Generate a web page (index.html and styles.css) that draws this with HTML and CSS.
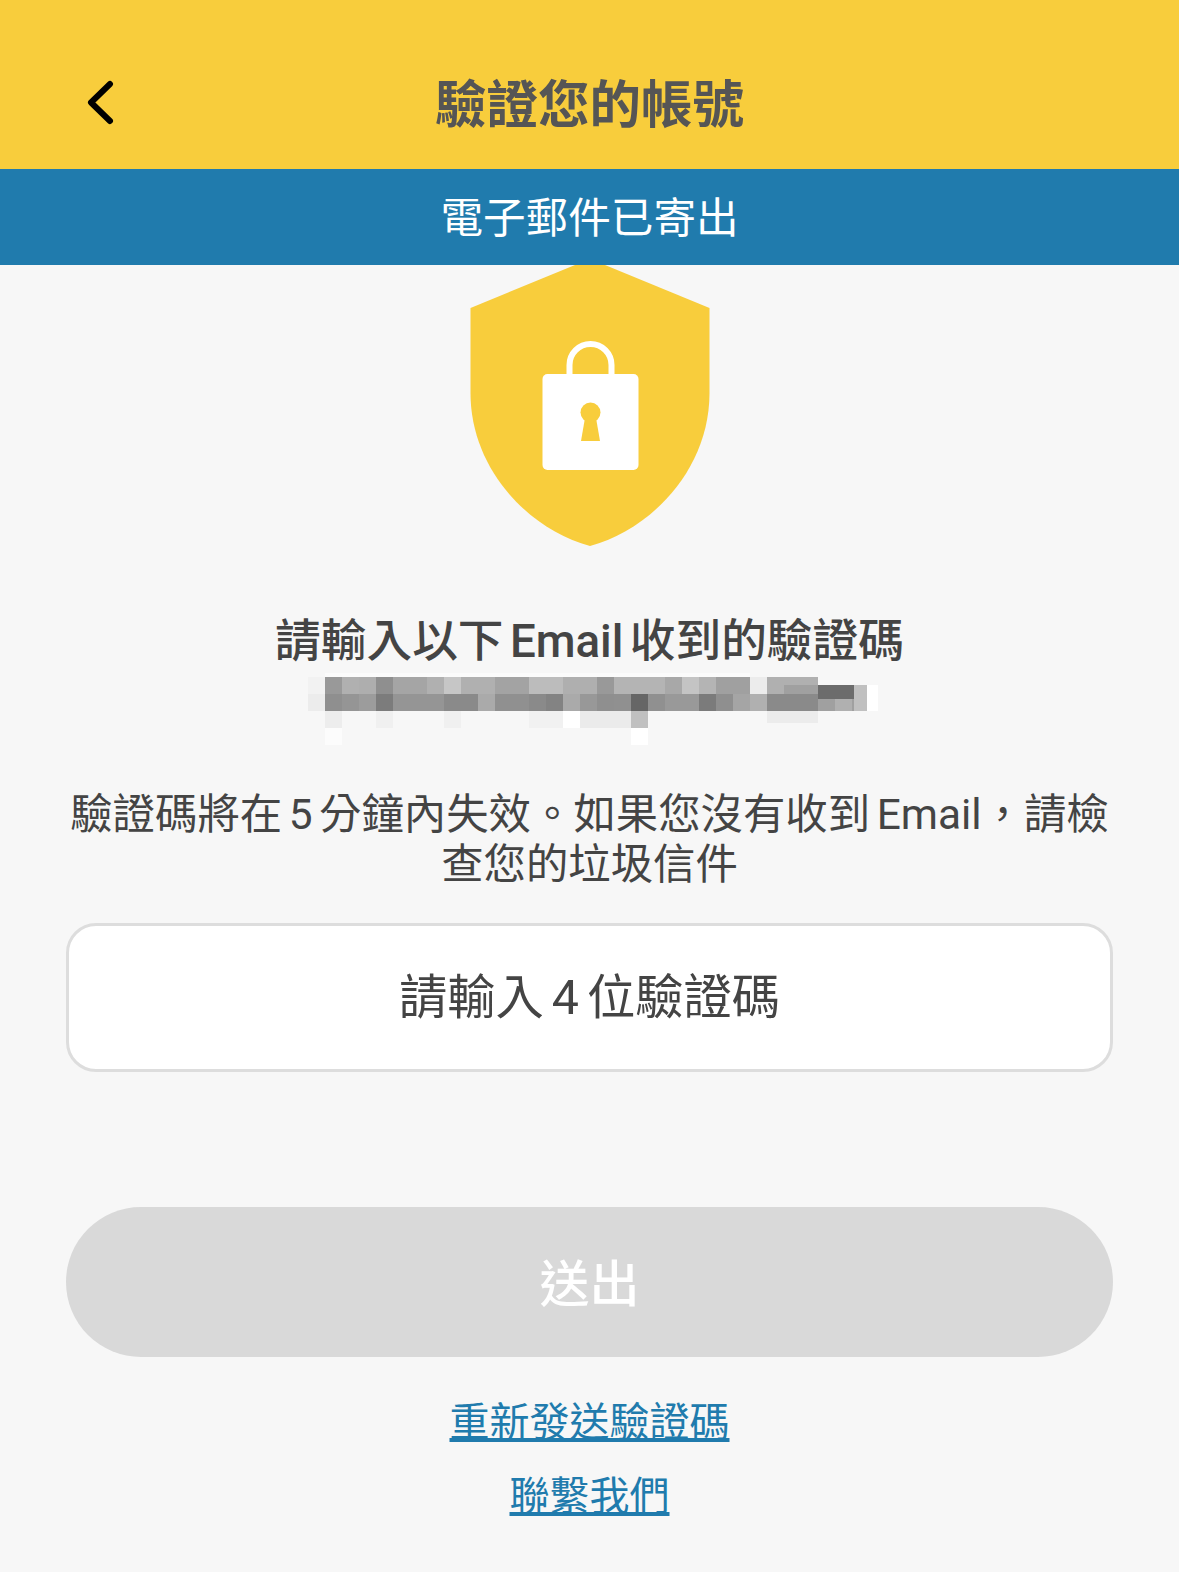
FILE: index.html
```html
<!DOCTYPE html>
<html lang="zh-Hant">
<head>
<meta charset="utf-8">
<title>驗證您的帳號</title>
<link rel="stylesheet" href="styles.css">
</head>
<body>
<div class="page">
  <header class="topbar">
    <svg class="back" viewBox="0 0 30 46" aria-hidden="true"><path d="M24 5 L5 23.5 L24 42"/></svg>
    <h1 class="title">驗證您的帳號</h1>
  </header>
  <div class="notice">電子郵件已寄出</div>
  <main class="content">
    <svg class="shield" viewBox="0 0 240 282" aria-hidden="true">
      <path class="shield-body" d="M105 0 H135 L239.5 43 V128 C239.5 205 180 265 120 281 C60 265 0.5 205 0.5 128 V43 Z"/>
      <path class="lock-shackle" d="M99.5 112 V100 A21 21 0 0 1 141.5 100 V112"/>
      <rect class="lock-box" x="72.5" y="109" width="96" height="96" rx="5"/>
      <circle class="lock-hole" cx="120.5" cy="147.5" r="10"/>
      <path class="lock-hole" d="M115.5 150 H125.5 L130 176 H111 Z"/>
    </svg>
    <h2 class="heading">請輸入以下 Email 收到的驗證碼</h2>
    <svg class="mosaic" viewBox="0 -4 570 72" shape-rendering="crispEdges" aria-hidden="true">
      <rect x="17" y="-4" width="425" height="4" fill="#fbfbfb"/>
      <rect x="0" y="0" width="17" height="17" fill="#f2f2f2"/><rect x="0" y="17" width="17" height="17" fill="#ececec"/>
      <rect x="17" y="0" width="17" height="17" fill="#999"/><rect x="34" y="0" width="17" height="17" fill="#b0b0b0"/><rect x="51" y="0" width="17" height="17" fill="#aeaeae"/><rect x="68" y="0" width="17" height="17" fill="#8f8f8f"/><rect x="85" y="0" width="17" height="17" fill="#a5a5a5"/><rect x="102" y="0" width="17" height="17" fill="#a5a5a5"/><rect x="119" y="0" width="17" height="17" fill="#b0b0b0"/><rect x="136" y="0" width="17" height="17" fill="#c6c6c6"/><rect x="153" y="0" width="34" height="17" fill="#b0b0b0"/><rect x="187" y="0" width="34" height="17" fill="#a3a3a3"/><rect x="221" y="0" width="34" height="17" fill="#bcbcbc"/><rect x="255" y="0" width="34" height="17" fill="#afafaf"/><rect x="289" y="0" width="17" height="17" fill="#999"/><rect x="306" y="0" width="51" height="17" fill="#b4b4b4"/><rect x="357" y="0" width="17" height="17" fill="#a8a8a8"/><rect x="374" y="0" width="17" height="17" fill="#c4c4c4"/><rect x="391" y="0" width="17" height="17" fill="#b4b4b4"/><rect x="408" y="0" width="34" height="17" fill="#a0a0a0"/><rect x="442" y="0" width="17" height="17" fill="#ececec"/><rect x="459" y="0" width="51" height="17" fill="#b0b0b0"/>
      <rect x="17" y="17" width="17" height="17" fill="#8f8f8f"/><rect x="34" y="17" width="17" height="17" fill="#959595"/><rect x="51" y="17" width="17" height="17" fill="#9c9c9c"/><rect x="68" y="17" width="17" height="17" fill="#7c7c7c"/><rect x="85" y="17" width="51" height="17" fill="#959595"/><rect x="136" y="17" width="34" height="17" fill="#8a8a8a"/><rect x="170" y="17" width="17" height="17" fill="#aaa"/><rect x="187" y="17" width="34" height="17" fill="#909090"/><rect x="221" y="17" width="17" height="17" fill="#8a8a8a"/><rect x="238" y="17" width="17" height="17" fill="#838383"/><rect x="255" y="17" width="17" height="17" fill="#aaa"/><rect x="272" y="17" width="17" height="17" fill="#989898"/><rect x="289" y="17" width="17" height="17" fill="#8f8f8f"/><rect x="306" y="17" width="17" height="17" fill="#909090"/><rect x="323" y="17" width="17" height="17" fill="#666"/><rect x="340" y="17" width="17" height="17" fill="#909090"/><rect x="357" y="17" width="34" height="17" fill="#999"/><rect x="391" y="17" width="17" height="17" fill="#7b7b7b"/><rect x="408" y="17" width="17" height="17" fill="#8f8f8f"/><rect x="425" y="17" width="17" height="17" fill="#a5a5a5"/><rect x="442" y="17" width="17" height="17" fill="#b0b0b0"/><rect x="459" y="17" width="51" height="17" fill="#8a8a8a"/><rect x="510" y="17" width="17" height="17" fill="#a0a0a0"/><rect x="527" y="17" width="17" height="17" fill="#b0b0b0"/><rect x="544" y="17" width="2" height="17" fill="#a0a0a0"/>
      <rect x="546" y="8" width="13" height="26" fill="#c0c0c0"/><rect x="559" y="8" width="11" height="26" fill="#ffffff"/>
      <rect x="510" y="8" width="36" height="14" fill="#6c6c6c"/><rect x="476" y="8" width="34" height="9" fill="#a0a0a0"/>
      <rect x="17" y="34" width="17" height="17" fill="#ededed"/><rect x="68" y="34" width="17" height="17" fill="#f0f0f0"/><rect x="136" y="34" width="17" height="17" fill="#f0f0f0"/><rect x="221" y="34" width="34" height="17" fill="#f1f1f1"/><rect x="255" y="34" width="17" height="17" fill="#fff"/><rect x="272" y="34" width="51" height="17" fill="#ebebeb"/><rect x="323" y="34" width="17" height="17" fill="#c0c0c0"/><rect x="459" y="34" width="51" height="12" fill="#ececec"/>
      <rect x="323" y="51" width="17" height="17" fill="#fff"/><rect x="17" y="51" width="17" height="17" fill="#fcfcfc"/>
    </svg>
    <p class="body-text">驗證碼將在 5 分鐘內失效。如果您沒有收到 Email，請檢查您的垃圾信件</p>
    <div class="code-input">請輸入 4 位驗證碼</div>
    <button class="submit" type="button">送出</button>
    <a class="link link-first" href="#">重新發送驗證碼</a>
    <a class="link link-second" href="#">聯繫我們</a>
  </main>
</div>
</body>
</html>
```
FILE: styles.css
```css
* { box-sizing: border-box; margin: 0; padding: 0; }
html, body { width: 1179px; height: 1572px; overflow: hidden; }
body { background: #f7f7f7; font-family: Roboto, "Noto Sans CJK TC", sans-serif; color: #444; }
.page { display: flex; flex-direction: column; height: 1572px; }
.topbar { height: 169px; background: #f8cd3c; display: flex; align-items: center; justify-content: center; position: relative; padding-top: 42px; }
.back { position: absolute; left: 86px; top: 79px; width: 30px; height: 46px; }
.back path { fill: none; stroke: #000; stroke-width: 6; stroke-linecap: round; stroke-linejoin: round; }
.title { font-size: 51.5px; font-weight: 700; line-height: 70px; color: #555; }
.notice { height: 96px; padding-bottom: 6px; background: #207bad; color: #fff; font-size: 42.6px; display: flex; align-items: center; justify-content: center; }
.content { display: flex; flex-direction: column; align-items: center; padding: 0 66px; }
.shield { width: 240px; height: 282px; display: block; margin-left: 1px; }
.shield-body { fill: #f8cd3c; }
.lock-box { fill: #fff; }
.lock-hole { fill: #f8cd3c; }
.lock-shackle { fill: none; stroke: #fff; stroke-width: 6; }
.heading { font-size: 45.7px; font-weight: 500; line-height: 62px; margin-top: 64px; color: #444; text-align: center; word-spacing: -5px; }
.mosaic { width: 570px; height: 72px; display: block; margin: 0 0 0 7px; }
.body-text { font-size: 42.4px; line-height: 50px; text-align: center; margin-top: 45px; color: #444; width: 1047px; word-spacing: -4px; }
.code-input { width: 1047px; height: 149px; margin-top: 33px; padding-bottom: 10px; background: #fff; border: 3px solid #ddd; border-radius: 30px; display: flex; align-items: center; justify-content: center; font-size: 48.3px; color: #444; word-spacing: -4px; }
.submit { width: 1047px; height: 150px; margin-top: 135px; padding-bottom: 4px; border: 0; border-radius: 75px; background: #d9d9d9; color: #fff; font: 500 50px Roboto, "Noto Sans CJK TC", sans-serif; }
.link { font-size: 40px; line-height: 50px; color: #207bad; text-decoration: underline; }
.link-first { margin-top: 41px; }
.link-second { margin-top: 24px; }
```
